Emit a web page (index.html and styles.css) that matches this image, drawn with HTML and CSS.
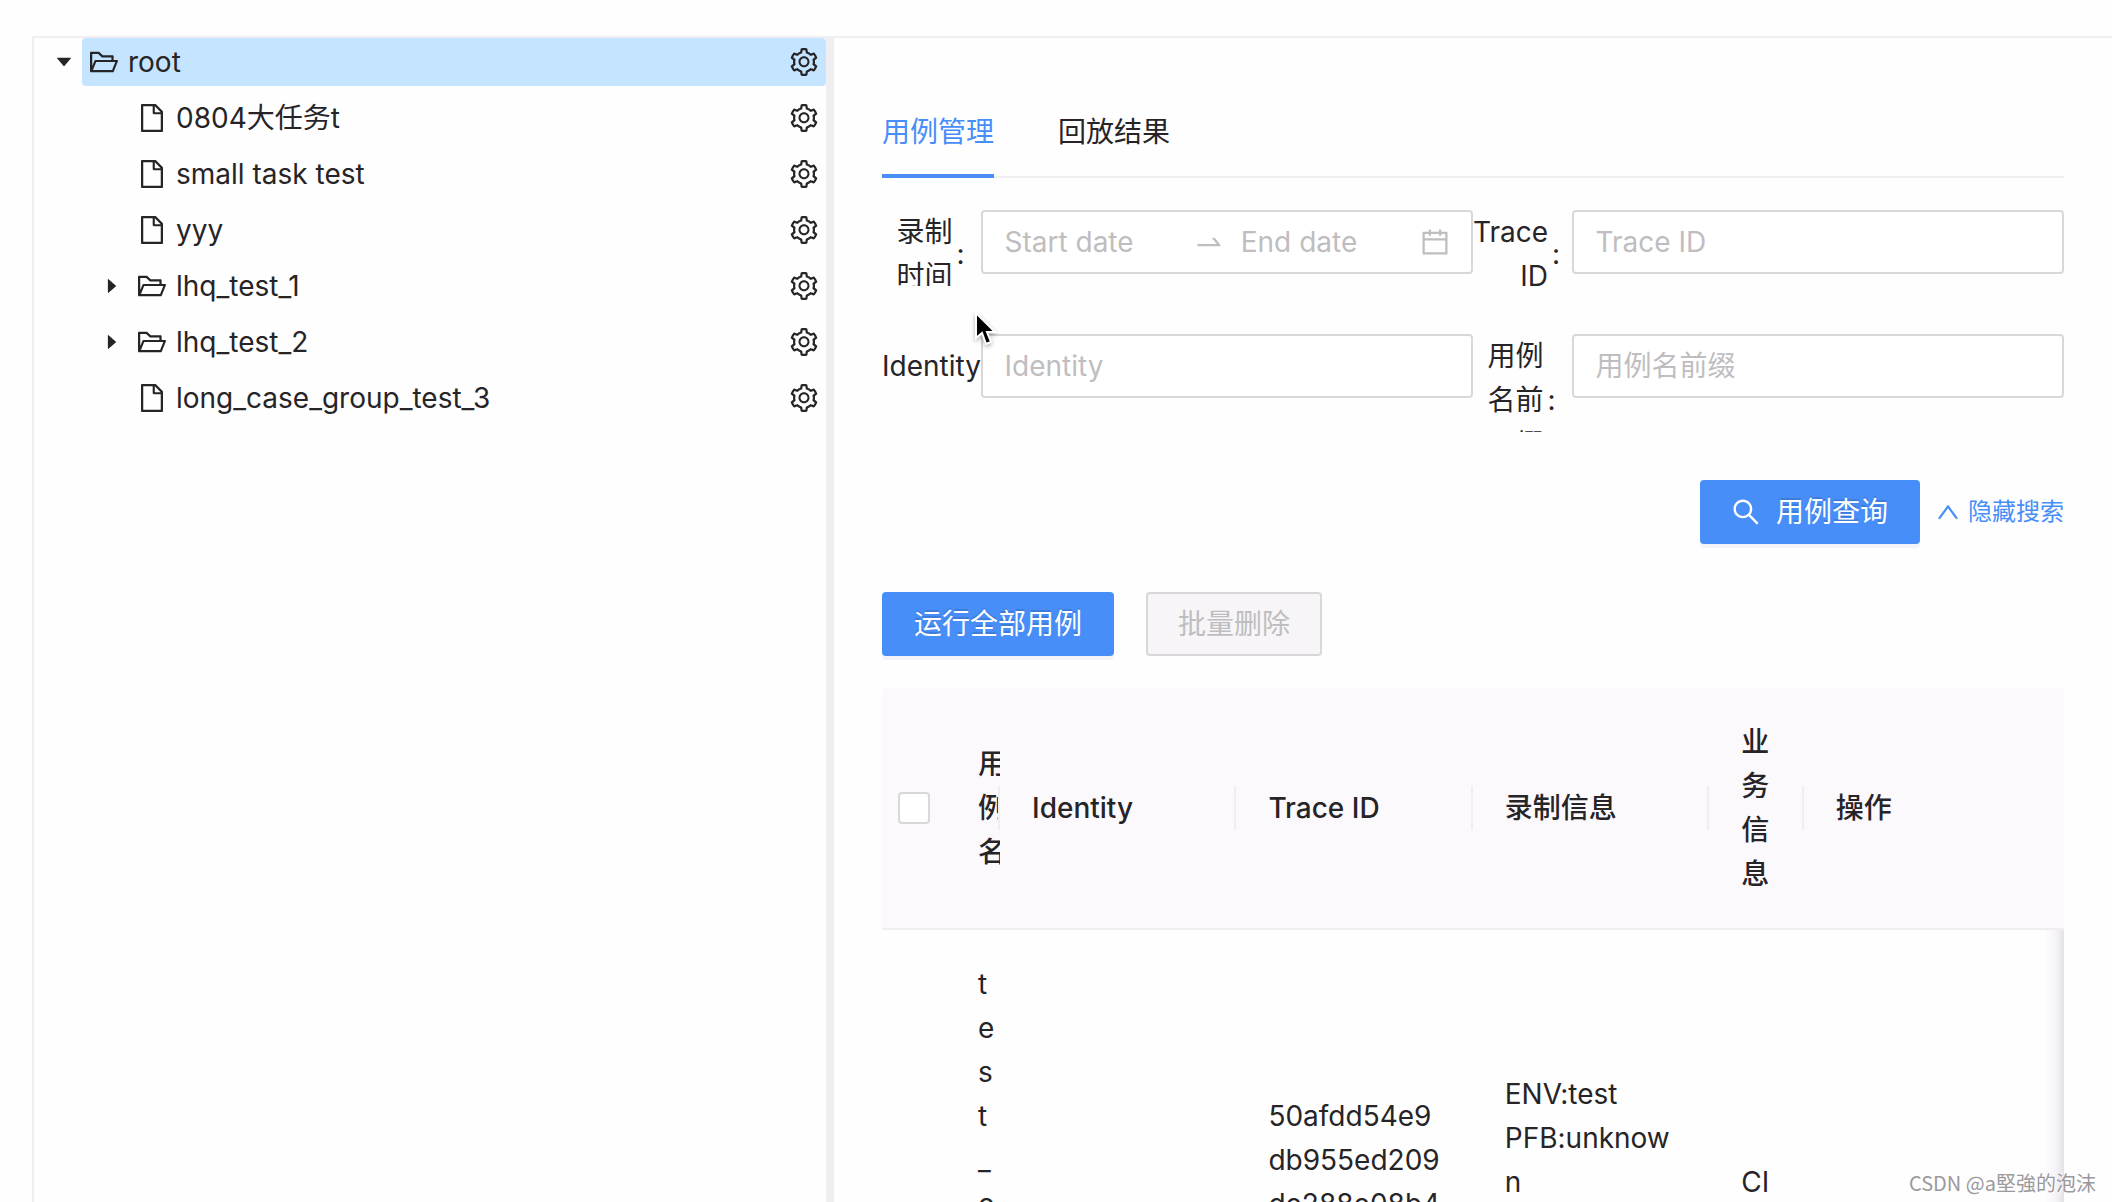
FILE: index.html
```html
<!DOCTYPE html>
<html lang="zh-CN">
<head>
<meta charset="utf-8">
<title>用例管理</title>
<link rel="stylesheet" href="styles.css">
</head>
<body>
<svg class="sprite" aria-hidden="true">
  <symbol id="folder" viewBox="64 64 896 896"><path d="M928 444H820V330.400c0-17.700-14.300-32-32-32H473L355.700 186.200a8.150 8.150 0 0 0-5.500-2.200H96c-17.700 0-32 14.300-32 32v592c0 17.700 14.300 32 32 32h698c13 0 24.800-7.900 29.700-20l134-332c1.500-3.800 2.300-7.900 2.300-12 0-17.700-14.300-32-32-32zM136 256h188.500l119.600 114.400H748V444H238c-13 0-24.800 7.900-29.700 20L136 643.200V256zm635.300 512H159l103.300-256h612.400L771.300 768z"/></symbol>
  <symbol id="file" viewBox="64 64 896 896"><path d="M854.600 288.600L639.400 73.400c-6-6-14.100-9.400-22.600-9.400H192c-17.700 0-32 14.300-32 32v832c0 17.700 14.300 32 32 32h640c17.700 0 32-14.300 32-32V311.300c0-8.500-3.400-16.700-9.400-22.700zM790.200 326H602V137.800L790.200 326zm1.800 562H232V136h302v216a42 42 0 0 0 42 42h216v494z"/></symbol>
  <symbol id="gear" viewBox="64 64 896 896"><path d="M924.800 625.700l-65.500-56c3.100-19 4.700-38.400 4.700-57.800s-1.600-38.800-4.700-57.800l65.500-56a32.030 32.030 0 0 0 9.300-35.200l-.9-2.600a443.740 443.740 0 0 0-79.700-137.900l-1.800-2.100a32.120 32.120 0 0 0-35.100-9.500l-81.300 28.900c-30-24.600-63.500-44-99.700-57.600l-15.700-85a32.050 32.050 0 0 0-25.800-25.700l-2.700-.5c-52.100-9.400-106.900-9.400-159 0l-2.700.5a32.050 32.050 0 0 0-25.800 25.700l-15.800 85.400a351.860 351.860 0 0 0-99 57.400l-81.900-29.100a32 32 0 0 0-35.100 9.500l-1.800 2.100a446.020 446.020 0 0 0-79.700 137.900l-.9 2.600c-4.500 12.500-.8 26.500 9.300 35.200l66.300 56.600c-3.100 18.800-4.600 38-4.600 57.100 0 19.200 1.500 38.400 4.600 57.100L99 625.500a32.030 32.030 0 0 0-9.300 35.200l.9 2.600c18.100 50.400 44.900 96.900 79.700 137.900l1.800 2.100a32.120 32.120 0 0 0 35.100 9.500l81.900-29.100c29.800 24.500 63.100 43.900 99 57.400l15.800 85.400a32.050 32.050 0 0 0 25.800 25.700l2.700.5a449.400 449.400 0 0 0 159 0l2.700-.5a32.050 32.050 0 0 0 25.800-25.700l15.700-85a350 350 0 0 0 99.700-57.600l81.300 28.900a32 32 0 0 0 35.100-9.500l1.800-2.100c34.800-41.100 61.600-87.500 79.700-137.900l.9-2.600c4.500-12.300.8-26.300-9.300-35zM788.300 465.900c2.500 15.100 3.800 30.600 3.800 46.100s-1.300 31-3.800 46.100l-6.600 40.100 74.700 63.900a370.030 370.030 0 0 1-42.600 73.600L721 702.800l-31.400 25.800c-23.900 19.600-50.500 35-79.300 45.800l-38.100 14.300-17.900 97a377.500 377.500 0 0 1-85 0l-17.900-97.200-37.800-14.500c-28.500-10.800-55-26.200-78.700-45.700l-31.400-25.900-93.400 33.200c-17-22.900-31.200-47.600-42.600-73.600l75.500-64.500-6.500-40c-2.400-14.900-3.700-30.300-3.700-45.500 0-15.300 1.200-30.600 3.700-45.500l6.500-40-75.500-64.500c11.300-26.100 25.600-50.700 42.600-73.600l93.400 33.200 31.400-25.900c23.700-19.500 50.200-34.900 78.700-45.700l37.900-14.300 17.900-97.200c28.100-3.200 56.800-3.200 85 0l17.900 97 38.100 14.300c28.700 10.800 55.400 26.200 79.300 45.800l31.400 25.800 92.800-32.900c17 22.900 31.200 47.600 42.600 73.600L781.800 426l6.500 39.900zM512 326c-97.200 0-176 78.800-176 176s78.800 176 176 176 176-78.800 176-176-78.800-176-176-176zm79.200 255.200A111.600 111.600 0 0 1 512 614c-29.900 0-58-11.700-79.200-32.800A111.600 111.600 0 0 1 400 502c0-29.900 11.700-58 32.800-79.200C454 401.600 482.100 390 512 390c29.900 0 58 11.600 79.200 32.800A111.600 111.600 0 0 1 624 502c0 29.900-11.700 58-32.800 79.200z"/></symbol>
  <symbol id="caret" viewBox="0 0 1024 1024"><path d="M840.400 300H183.600c-19.700 0-30.700 20.800-18.500 35l328.400 380.800c9.400 10.900 27.500 10.900 37 0L858.900 335c12.200-14.200 1.200-35-18.500-35z"/></symbol>
  <symbol id="search" viewBox="64 64 896 896"><path d="M909.600 854.500L649.900 594.800C690.200 542.700 712 479 712 412c0-80.200-31.300-155.400-87.900-212.100-56.600-56.700-132-87.900-212.100-87.900s-155.500 31.300-212.100 87.900C143.200 256.500 112 331.800 112 412c0 80.100 31.300 155.500 87.900 212.100C256.500 680.800 331.800 712 412 712c67 0 130.600-21.800 182.700-62l259.700 259.600a8.200 8.200 0 0 0 11.600 0l43.600-43.500a8.200 8.200 0 0 0 0-11.600zM570.400 570.400C528 612.700 471.800 636 412 636s-116-23.300-158.400-65.600C211.300 528 188 471.800 188 412s23.300-116.100 65.600-158.400C296 211.300 352.200 188 412 188s116.100 23.200 158.400 65.600S636 352.200 636 412s-23.300 116.100-65.600 158.400z"/></symbol>
  <symbol id="up" viewBox="64 64 896 896"><path d="M890.500 755.300L537.900 269.200c-12.800-17.600-39-17.600-51.700 0L133.500 755.300A8 8 0 0 0 140 768h75c5.100 0 9.900-2.500 12.900-6.600L512 369.800l284.100 391.600c3 4.100 7.800 6.600 12.900 6.600h75c6.500 0 10.300-7.400 6.500-12.700z"/></symbol>
  <symbol id="swap" viewBox="0 0 1024 1024"><path d="M873.100 596.200l-164-208A32 32 0 0 0 684 376h-64.800c-6.700 0-10.400 7.700-6.300 13l144.300 183H152c-4.400 0-8 3.600-8 8v60c0 4.400 3.600 8 8 8h695.900c26.800 0 41.700-30.800 25.200-51.800z"/></symbol>
  <symbol id="calendar" viewBox="64 64 896 896"><path d="M880 184H712v-64c0-4.400-3.600-8-8-8h-56c-4.400 0-8 3.600-8 8v64H384v-64c0-4.400-3.600-8-8-8h-56c-4.400 0-8 3.600-8 8v64H144c-17.700 0-32 14.300-32 32v664c0 17.700 14.300 32 32 32h736c17.700 0 32-14.300 32-32V216c0-17.700-14.300-32-32-32zm-40 656H184V460h656v380zM184 392V256h128v48c0 4.400 3.600 8 8 8h56c4.400 0 8-3.600 8-8v-48h256v48c0 4.400 3.600 8 8 8h56c4.400 0 8-3.600 8-8v-48h128v136H184z"/></symbol>
</svg>

<div class="layout">
  <aside class="sidebar">
    <ul class="tree">
      <li class="node">
        <button class="switcher" aria-label="收起 root"><svg class="caret"><use href="#caret"/></svg></button>
        <div class="node-body selected"><svg class="icon"><use href="#folder"/></svg><span class="node-name">root</span><button class="setting" aria-label="设置"><svg class="icon"><use href="#gear"/></svg></button></div>
      </li>
      <li class="node child">
        <span class="switcher"></span>
        <div class="node-body"><svg class="icon"><use href="#file"/></svg><span class="node-name">0804大任务t</span><button class="setting" aria-label="设置"><svg class="icon"><use href="#gear"/></svg></button></div>
      </li>
      <li class="node child">
        <span class="switcher"></span>
        <div class="node-body"><svg class="icon"><use href="#file"/></svg><span class="node-name">small task test</span><button class="setting" aria-label="设置"><svg class="icon"><use href="#gear"/></svg></button></div>
      </li>
      <li class="node child">
        <span class="switcher"></span>
        <div class="node-body"><svg class="icon"><use href="#file"/></svg><span class="node-name">yyy</span><button class="setting" aria-label="设置"><svg class="icon"><use href="#gear"/></svg></button></div>
      </li>
      <li class="node child">
        <button class="switcher" aria-label="展开 lhq_test_1"><svg class="caret closed"><use href="#caret"/></svg></button>
        <div class="node-body"><svg class="icon"><use href="#folder"/></svg><span class="node-name">lhq_test_1</span><button class="setting" aria-label="设置"><svg class="icon"><use href="#gear"/></svg></button></div>
      </li>
      <li class="node child">
        <button class="switcher" aria-label="展开 lhq_test_2"><svg class="caret closed"><use href="#caret"/></svg></button>
        <div class="node-body"><svg class="icon"><use href="#folder"/></svg><span class="node-name">lhq_test_2</span><button class="setting" aria-label="设置"><svg class="icon"><use href="#gear"/></svg></button></div>
      </li>
      <li class="node child">
        <span class="switcher"></span>
        <div class="node-body"><svg class="icon"><use href="#file"/></svg><span class="node-name">long_case_group_test_3</span><button class="setting" aria-label="设置"><svg class="icon"><use href="#gear"/></svg></button></div>
      </li>
    </ul>
  </aside>

  <main class="content">
    <nav class="tabs">
      <a class="tab active" href="#cases">用例管理</a>
      <a class="tab" href="#results">回放结果</a>
    </nav>

    <form class="search" id="cases">
      <div class="label-col"><label class="label" for="start"><span>录制时间</span></label></div>
      <div class="range">
        <input class="range-input" id="start" type="text" placeholder="Start date">
        <svg class="swap"><use href="#swap"/></svg>
        <input class="range-input" type="text" placeholder="End date" aria-label="End date">
        <svg class="icon"><use href="#calendar"/></svg>
      </div>
      <div class="label-col"><label class="label" for="trace"><span>Trace ID</span></label></div>
      <input class="field" id="trace" type="text" placeholder="Trace ID">
      <div class="label-col"><label class="label" for="identity"><span>Identity</span></label></div>
      <input class="field" id="identity" type="text" placeholder="Identity">
      <div class="label-col"><label class="label" for="prefix"><span>用例名前缀</span></label></div>
      <input class="field" id="prefix" type="text" placeholder="用例名前缀">
      <div class="search-actions">
        <button class="btn primary" type="button"><svg class="icon"><use href="#search"/></svg>用例查询</button>
        <a class="toggle" href="#cases"><svg class="icon"><use href="#up"/></svg>隐藏搜索</a>
      </div>
    </form>

    <div class="toolbar">
      <button class="btn primary" type="button">运行全部用例</button>
      <button class="btn" type="button" disabled>批量删除</button>
    </div>

    <div class="table-wrap">
      <table class="cases">
        <colgroup><col class="col-check"><col class="col-name"><col class="col-text"><col class="col-text"><col class="col-text"><col class="col-biz"><col></colgroup>
        <thead>
          <tr>
            <th class="check"><input type="checkbox" aria-label="全选"></th>
            <th class="divided clip">用例名</th>
            <th class="divided">Identity</th>
            <th class="divided">Trace ID</th>
            <th class="divided">录制信息</th>
            <th class="divided">业务信息</th>
            <th>操作</th>
          </tr>
        </thead>
        <tbody>
          <tr>
            <td></td>
            <td>test_case1</td>
            <td></td>
            <td>50afdd54e9<wbr>db955ed209<wbr>de288e08b4<wbr>21</td>
            <td>ENV:test<br>PFB:unknow<wbr>n<br>HOST:test<br>V:1</td>
            <td>CI</td>
            <td></td>
          </tr>
        </tbody>
      </table>
    </div>

    <svg class="pointer" viewBox="0 0 24 38" aria-hidden="true"><path d="M3 2v25l6-5 4 11 5-2-4-10h8z"/></svg>
  </main>
</div>
<div class="watermark">CSDN @a堅強的泡沫</div>
</body>
</html>
```

FILE: styles.css
```css
:root {
  --text: #262427;
  --blue: #478ef9;
  --line: #f0eef1;
  --border: #d9d7da;
  --muted: #bfbdc0;
}

* {
  box-sizing: border-box;
}

body {
  margin: 0;
  height: 100vh;
  overflow: hidden;
  background: #fefefe;
  color: var(--text);
  font: 28px/44px Inter, "Noto Sans CJK SC", sans-serif;
}

button,
input {
  font: inherit;
  color: inherit;
}

a {
  color: var(--blue);
  text-decoration: none;
}

.sprite {
  display: none;
}

.icon {
  flex: none;
  width: 28px;
  height: 28px;
  fill: currentColor;
}

.layout {
  display: flex;
  height: 100%;
  padding: 36px 0 0 32px;
  overflow: hidden;
}

/* Case group tree */
.sidebar {
  flex: 0 0 802px;
  border: 2px solid var(--line);
  border-right-width: 8px;
  border-bottom: 0;
}

.tree {
  display: flex;
  flex-direction: column;
  gap: 8px;
  margin: 0;
  padding: 0;
  list-style: none;
}

.node {
  display: flex;
  height: 48px;
}

.child {
  padding-left: 48px;
}

.switcher {
  display: flex;
  flex: none;
  align-items: center;
  justify-content: center;
  width: 48px;
  padding: 0 0 0 12px;
  border: 0;
  background: none;
}

.caret {
  width: 20px;
  height: 20px;
  fill: currentColor;
}

.closed {
  transform: rotate(-90deg);
}

.node-body {
  display: flex;
  flex: 1;
  align-items: center;
  gap: 10px;
  padding: 0 8px;
  border-radius: 4px;
}

.selected {
  background: #c5e4ff;
}

.node-name {
  flex: 1;
}

.setting {
  display: flex;
  padding: 0;
  border: 0;
  background: none;
}

/* Right-hand pane */
.content {
  position: relative;
  flex: 1;
  min-width: 0;
  padding: 48px 48px 0;
  border-top: 2px solid var(--line);
}

.tabs {
  display: flex;
  gap: 64px;
  margin-bottom: 32px;
  box-shadow: inset 0 -2px var(--line);
}

.tab {
  padding: 24px 0 20px;
  border-bottom: 4px solid transparent;
  color: var(--text);
}

.tab.active {
  border-color: var(--blue);
  color: var(--blue);
}

/* Search form */
.search {
  display: grid;
  grid-template-columns: minmax(0, 1fr) minmax(0, 5fr) minmax(0, 1fr) minmax(0, 5fr);
  grid-template-rows: 76px 98px;
  row-gap: 48px;
}

.label-col {
  display: flex;
  justify-content: flex-end;
  align-items: flex-start;
  overflow: hidden;
}

.label {
  display: flex;
  align-items: center;
  max-width: 100%;
  min-height: 64px;
  text-align: right;
}

.label::after {
  content: ":";
  margin: 0 16px 0 4px;
}

.field,
.range {
  width: 100%;
  height: 64px;
  padding: 0 22px;
  border: 2px solid var(--border);
  border-radius: 4px;
  background: #fff;
}

.range {
  display: flex;
  align-items: center;
  color: var(--muted);
}

.range-input {
  flex: 1;
  min-width: 0;
  padding: 0;
  border: 0;
  background: none;
}

.range .icon {
  margin-left: 8px;
}

.swap {
  flex: none;
  width: 32px;
  height: 32px;
  margin: 0 16px;
  fill: currentColor;
}

::placeholder {
  color: var(--muted);
  opacity: 1;
}

.search-actions {
  display: flex;
  grid-column: 1 / -1;
  align-items: center;
  justify-content: flex-end;
  gap: 16px;
}

.btn {
  display: flex;
  align-items: center;
  gap: 16px;
  height: 64px;
  padding: 0 30px;
  border: 2px solid var(--border);
  border-radius: 4px;
}

.btn:disabled {
  background: #f7f5f8;
  color: var(--muted);
}

.primary {
  border-color: var(--blue);
  background: var(--blue);
  box-shadow: 0 4px 0 #f5f3f8;
  color: #fff;
  text-shadow: 0 -2px 0 rgba(0, 0, 0, 0.12);
}

.toggle {
  display: flex;
  align-items: center;
  gap: 8px;
  font-size: 24px;
}

.toggle .icon {
  width: 24px;
  height: 24px;
}

.toolbar {
  display: flex;
  gap: 32px;
  margin: 48px 0 32px;
}

/* Case table */
.table-wrap {
  position: relative;
}

.table-wrap::after {
  content: "";
  position: absolute;
  top: 242px;
  right: 0;
  bottom: 0;
  width: 20px;
  background: linear-gradient(to left, #e4e2e6, #f5f3f6 40%, transparent);
}

.cases {
  width: 100%;
  table-layout: fixed;
  border-collapse: separate;
  border-spacing: 0;
}

.col-check {
  width: 64px;
}

.col-name {
  width: 54px;
}

.col-text {
  width: 20%;
}

.col-biz {
  width: 8%;
}

th,
td {
  padding: 32px;
  border-bottom: 2px solid var(--line);
  text-align: left;
  word-break: break-all;
}

th {
  position: relative;
  background: #fbf9fc;
  font-weight: 500;
}

th:first-child {
  border-top-left-radius: 4px;
}

th:last-child {
  border-top-right-radius: 4px;
}

.clip {
  overflow: hidden;
}

.divided::before {
  content: "";
  position: absolute;
  top: 50%;
  right: 0;
  width: 2px;
  height: 44px;
  margin-top: -22px;
  background: var(--line);
}

th.check,
td:first-child {
  padding: 0 16px;
}

.check input {
  display: block;
  width: 32px;
  height: 32px;
  margin: 0;
  appearance: none;
  border: 2px solid var(--border);
  border-radius: 4px;
  background: #fff;
}

.pointer {
  position: absolute;
  top: 273px;
  left: 139px;
  width: 24px;
  height: 38px;
  stroke: #fff;
  stroke-width: 2;
  filter: drop-shadow(0 2px 2px rgba(0, 0, 0, 0.3));
}

.watermark {
  position: absolute;
  right: 16px;
  bottom: 4px;
  color: #9b999c;
  font-family: "Noto Sans CJK SC", sans-serif;
  font-size: 20px;
  line-height: 30px;
  text-shadow: 1px 1px 0 #fff;
}
```
